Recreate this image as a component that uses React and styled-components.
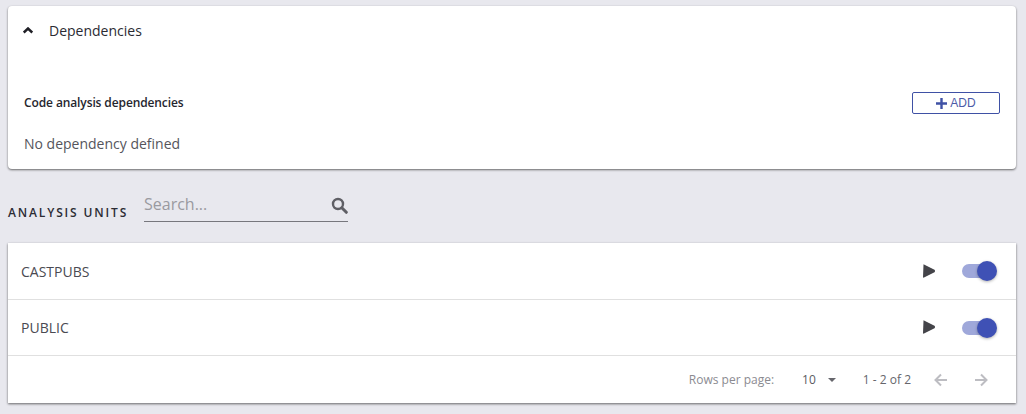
import React from "react";
import styled, { createGlobalStyle } from "styled-components";

const Global = createGlobalStyle`
  html, body { margin: 0; padding: 0; background: #e8e8ee; overflow: hidden; }
  body { font-family: "Open Sans", "Liberation Sans", sans-serif; }
`;
const Page = styled.div`
  width: 1026px; height: 414px; box-sizing: border-box; padding: 6px 10px 0 8px;
  display: flex; flex-direction: column;
`;
const Card = styled.section`
  background: #fff;
  border-radius: ${p => p.$radius || 0}px;
  box-shadow: 0 1px 2px rgba(0,0,0,.45), 0 1px 3px rgba(0,0,0,.15);
`;
const DepCard = styled(Card)`
  height: 163px; box-sizing: border-box; display: flex; flex-direction: column; padding: 0 16px;
`;
const AccordionHead = styled.div`
  height: 49px; display: flex; align-items: center; gap: 15px;
  font-size: 14px; color: #2b2b33;
`;
const Chevron = styled.svg`
  width: 10px; height: 7px; margin-left: -1px; margin-right: 1px; margin-top: -1px; display: block;
`;
const DepRow = styled.div`
  margin-top: 27px; height: 43px; display: flex; align-items: flex-start; justify-content: space-between;
`;
const DepTitle = styled.div`
  font-size: 12px; font-weight: 600; color: #26262e; margin-top: 12px; line-height: 17px; letter-spacing: -0.11px;
`;
const AddButton = styled.button`
  width: 88px; height: 22px; box-sizing: border-box; background: #fff; border: 1px solid #3f51a5;
  border-radius: 2px; margin: 10px 0 0 0; padding: 0; display: flex; align-items: center; justify-content: center; gap: 3px;
  font-family: "Liberation Sans", Arial, sans-serif; font-size: 12px; color: #4c5ba8;
`;
const PlusIcon = styled.svg`
  width: 11px; height: 11px; display: block;
`;
const EmptyText = styled.div`
  font-size: 14px; line-height: 19px; color: #55555c; margin-top: 9px;
`;
const SectionBar = styled.div`
  height: 74px; display: flex; align-items: flex-start;
`;
const SectionTitle = styled.h2`
  margin: 36px 0 0 0; font-size: 12px; line-height: 16px; font-weight: 600; letter-spacing: 1.85px;
  color: #2c2c34; text-transform: uppercase; width: 136px; white-space: nowrap;
`;
const SearchBox = styled.div`
  width: 204px; height: 32px; margin-top: 21px; box-sizing: border-box; border-bottom: 1px solid #77777d;
  display: flex; align-items: center; justify-content: space-between; padding-bottom: 6px;
`;
const SearchText = styled.span`
  font-size: 16px; line-height: 22px; color: #9a9aa0; margin-top: 2px;
`;
const SearchIcon = styled.svg`
  width: 17px; height: 17px; display: block; margin-top: 5px;
`;
const UnitsCard = styled(Card)`
  height: 160px; display: flex; flex-direction: column;
`;
const Row = styled.div`
  height: ${p => p.$h}px; flex: none; box-sizing: border-box; border-bottom: 1px solid #e0e0e0;
  display: flex; align-items: center; padding: 0 20px 0 13px;
`;
const RowName = styled.span`
  flex: 1; font-size: 14px; color: #4a4a52;
`;
const PlayIcon = styled.svg`
  width: 12px; height: 14px; display: block; margin-right: 27px; margin-top: -1px;
`;
const Toggle = styled.span`
  position: relative; display: block; width: 34px; height: 14px; border-radius: 7px; background: #9fa8da;
`;
const Knob = styled.span`
  position: absolute; right: -1px; top: -3px; width: 20px; height: 20px; border-radius: 50%; background: #3f51b5;
  box-shadow: 0 1px 3px rgba(0,0,0,.3);
`;
const Footer = styled.div`
  flex: 1; display: flex; align-items: center; justify-content: flex-end; padding: 0 28px 0 0;
  font-size: 12px; color: #77777d;
`;
const Rows = styled.span`
  font-size: 12px; color: #8b8b91; margin-right: 28px;
`;
const PerPage = styled.span`
  font-size: 12px; color: #5b5b62; margin-right: 12px; margin-top: -1px;
`;
const Caret = styled.span`
  width: 0; height: 0; border-left: 4px solid transparent; border-right: 4px solid transparent;
  border-top: 4px solid #66666c; margin-right: 27px;
`;
const Range = styled.span`
  font-size: 12px; color: #66666c; margin-right: 23px;
`;
const Arrow = styled.svg`
  width: 14px; height: 14px; display: block; margin-left: ${p => p.$gap || 0}px;
`;

const Unit = ({ name, h }) => (
  <Row $h={h}>
    <RowName>{name}</RowName>
    <PlayIcon viewBox="0 0 12 14"><path d="M0.5 0.5 Q0 0 1 0.4 L11.5 5.8 Q12 6.2 12 7 Q12 7.8 11.5 8.2 L1 13.6 Q0 14 0 13 Z" fill="#444449" /></PlayIcon>
    <Toggle><Knob /></Toggle>
  </Row>
);

export default function App() {
  return (
    <Page>
      <Global />
      <DepCard $radius={4}>
        <AccordionHead>
          <Chevron viewBox="0 0 10 7"><path d="M0.7 5.6 L5 1.5 L9.3 5.6" fill="none" stroke="#1f1f25" strokeWidth="2.5" /></Chevron>
          <span>Dependencies</span>
        </AccordionHead>
        <DepRow>
          <DepTitle>Code analysis dependencies</DepTitle>
          <AddButton>
            <PlusIcon viewBox="0 0 11 11"><path d="M5.5 0 V11 M0 5.5 H11" stroke="#3f51a5" strokeWidth="2.4" /></PlusIcon>
            ADD
          </AddButton>
        </DepRow>
        <EmptyText>No dependency defined</EmptyText>
      </DepCard>
      <SectionBar>
        <SectionTitle>Analysis Units</SectionTitle>
        <SearchBox>
          <SearchText>Search...</SearchText>
          <SearchIcon viewBox="0 0 17 17">
            <circle cx="7" cy="7" r="5" fill="none" stroke="#5f5f65" strokeWidth="2.4" />
            <path d="M10.8 10.8 L15.3 15.3" stroke="#5f5f65" strokeWidth="3" strokeLinecap="round" />
          </SearchIcon>
        </SearchBox>
      </SectionBar>
      <UnitsCard>
        <Unit name="CASTPUBS" h={57} />
        <Unit name="PUBLIC" h={56} />
        <Footer>
          <Rows>Rows per page:</Rows>
          <PerPage>10</PerPage>
          <Caret />
          <Range>1 - 2 of 2</Range>
          <Arrow viewBox="0 0 14 14"><path d="M13 7 H2 M7 1.5 L1.5 7 L7 12.5" fill="none" stroke="#bdbdc2" strokeWidth="2" /></Arrow>
          <Arrow $gap={26} viewBox="0 0 14 14"><path d="M1 7 H12 M7 1.5 L12.5 7 L7 12.5" fill="none" stroke="#bdbdc2" strokeWidth="2" /></Arrow>
        </Footer>
      </UnitsCard>
    </Page>
  );
}
